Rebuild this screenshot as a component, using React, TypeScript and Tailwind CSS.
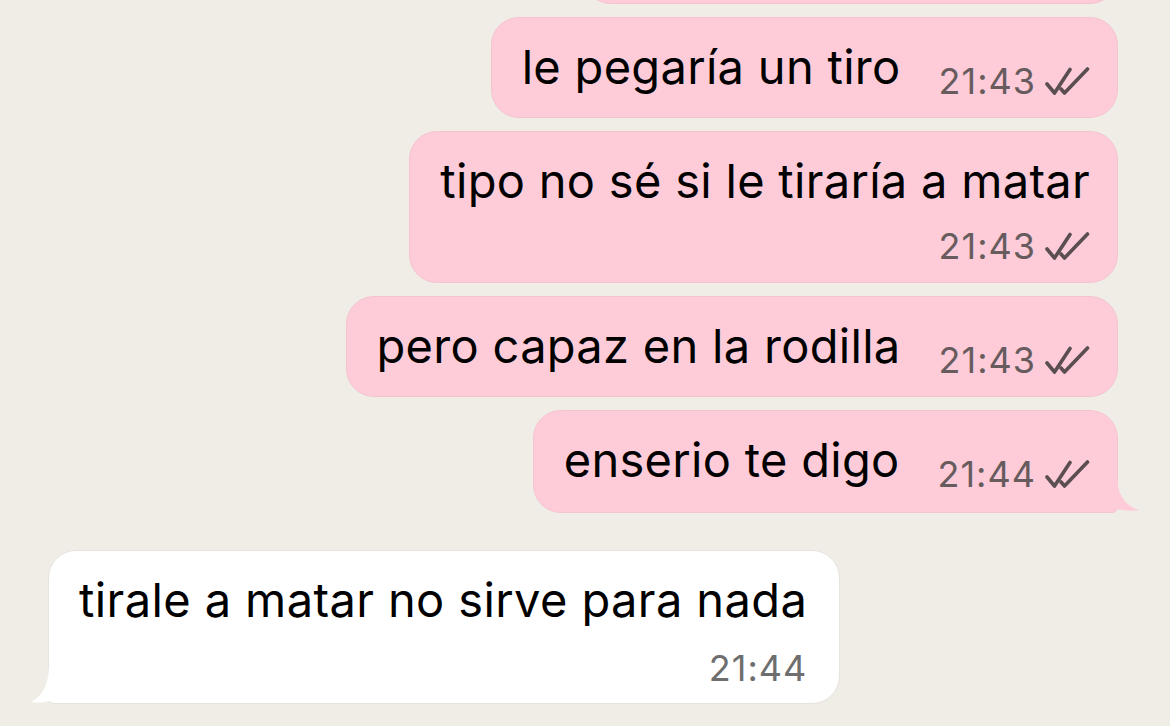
import React from 'react';

const Ticks: React.FC = () => (
  <svg width="46" height="28" viewBox="0 0 46 28" className="shrink-0" fill="none" stroke="#5a4e52" strokeWidth="3.6" strokeLinecap="round" strokeLinejoin="round">
    <path d="M3 17 L10.5 26 L26 2.5" />
    <path d="M17 22 L20.5 26 L43.5 2" />
  </svg>
);

const Meta: React.FC<{ time: string; ticks?: boolean; color: string }> = ({ time, ticks = true, color }) => (
  <div className="flex items-center gap-[8px] h-[40px]">
    <span className={`text-[36px] leading-[40px] tracking-[1px] ${color}`}>{time}</span>
    {ticks && <Ticks />}
  </div>
);

const OutTail: React.FC = () => (
  <svg className="absolute right-[-22px] bottom-[0px]" width="40" height="40" viewBox="0 0 40 40">
    <path d="M0 0 L18 0 C18 18 22 32 40 38 C30 40 18 38 10 34 C6 36 3 38 0 40 Z" fill="#fdccd8" />
  </svg>
);

const InTail: React.FC = () => (
  <svg className="absolute left-[-18px] bottom-[0px]" width="40" height="40" viewBox="0 0 40 40">
    <path d="M40 0 L18 0 C18 18 14 32 0 39 C10 41 22 38 30 33 C34 36 37 38 40 40 Z" fill="#ffffff" />
  </svg>
);

const OutBubble: React.FC<{ text: string; time: string; stacked?: boolean; tail?: boolean }> = ({ text, time, stacked, tail }) => (
  <div className={`relative bg-[#fdccd8] rounded-[28px] ${tail ? 'rounded-br-[6px]' : ''} border border-[#f5c4cf]`}>
    {tail && <OutTail />}
    {stacked ? (
      <div className="relative flex flex-col items-end pl-[30px] pr-[27px] pt-[24px] pb-[16px]">
        <span className="text-[47px] leading-[50px] tracking-[0.3px] text-black self-start">{text}</span>
        <div className="mt-[20px]">
          <Meta time={time} color="text-[#675b5e]" />
        </div>
      </div>
    ) : (
      <div className={`relative flex items-start pl-[30px] pr-[27px] pt-[24px] ${tail ? 'pb-[18px]' : 'pb-[16px]'}`}>
        <span className="text-[47px] leading-[50px] tracking-[0.3px] text-black">{text}</span>
        <div className="mt-[19px] ml-[38px]">
          <Meta time={time} color="text-[#675b5e]" />
        </div>
      </div>
    )}
  </div>
);

const InBubble: React.FC<{ text: string; time: string }> = ({ text, time }) => (
  <div className="relative bg-white rounded-[28px] rounded-bl-[6px] border border-[#e6e3dd]">
    <InTail />
    <div className="relative flex flex-col items-end pl-[30px] pr-[32px] pt-[24px] pb-[15px]">
      <span className="text-[47px] leading-[50px] tracking-[0.4px] text-black self-start">{text}</span>
      <div className="mt-[23px]">
        <Meta time={time} ticks={false} color="text-[#6e6e6e]" />
      </div>
    </div>
  </div>
);

export default function App() {
  return (
    <div className="w-[1170px] h-[726px] overflow-hidden bg-[#f0ede7] font-['Inter',_'Noto_Sans',sans-serif] antialiased">
      <div className="flex flex-col items-end pr-[52px] gap-[13px] mt-[-91px]">
        <div className="w-[535px] h-[95px] bg-[#fdccd8] rounded-[28px] border border-[#f5c4cf]" />
        <OutBubble text="le pegaría un tiro" time="21:43" />
        <OutBubble text="tipo no sé si le tiraría a matar" time="21:43" stacked />
        <OutBubble text="pero capaz en la rodilla" time="21:43" />
        <OutBubble text="enserio te digo" time="21:44" tail />
      </div>
      <div className="flex pl-[48px] mt-[37px]">
        <InBubble text="tirale a matar no sirve para nada" time="21:44" />
      </div>
    </div>
  );
}
